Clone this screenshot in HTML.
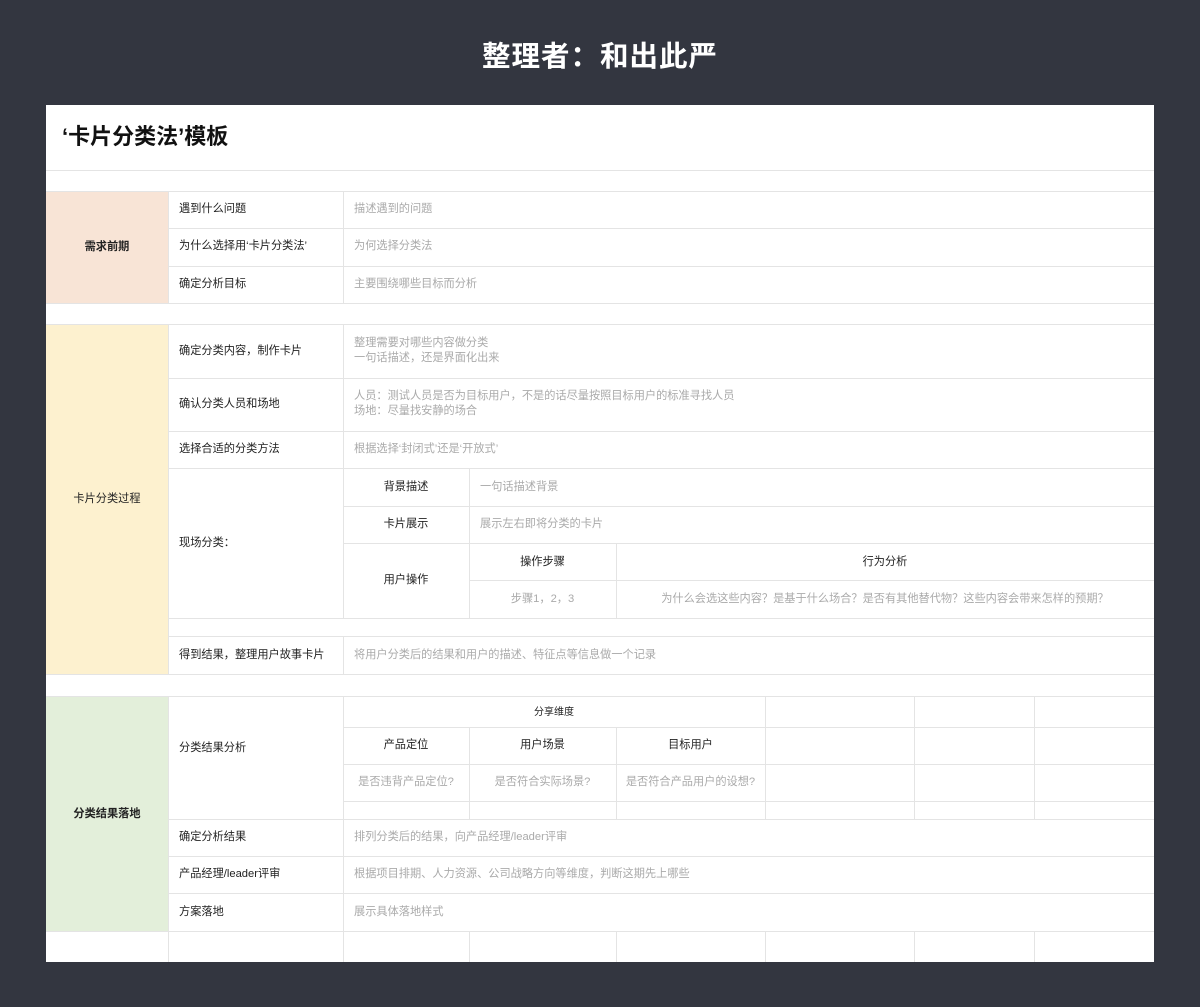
<!DOCTYPE html><html><head><meta charset="utf-8"><style>
body{margin:0;width:1200px;height:1007px;background:#333640;font-family:"Liberation Sans","Noto Sans CJK SC",sans-serif;position:relative;overflow:hidden}
#h{position:absolute;top:34px;left:0;width:1200px;text-align:center;color:#fff;font-size:28.5px;font-weight:bold;letter-spacing:1px}
#p{position:absolute;left:46px;top:105px;width:1108px;height:857px;background:#fff}
.h,.v{position:absolute;background:#e4e4e4}
.h{height:1px}.v{width:1px}
.f{position:absolute}
.t{position:absolute;font-size:11.2px;color:#222;line-height:15px;white-space:nowrap}
.g{color:#aaa}
.c{text-align:center}
.b{font-weight:bold}
</style></head><body>
<div id="h">整理者：和出此严</div>
<div id="p"></div>
<div class="t b" style="left:62px;top:123px;font-size:22px;line-height:27px;color:#111">‘卡片分类法’模板</div>
<div class="f" style="left:46px;top:191px;width:122px;height:112px;background:#f8e4d6"></div>
<div class="f" style="left:46px;top:324px;width:122px;height:350px;background:#fdf1cf"></div>
<div class="f" style="left:46px;top:696px;width:122px;height:235px;background:#e3efda"></div>
<div class="h" style="left:46px;width:1108px;top:170px"></div>
<div class="h" style="left:46px;width:1108px;top:191px"></div>
<div class="h" style="left:168px;width:986px;top:228px"></div>
<div class="h" style="left:168px;width:986px;top:266px"></div>
<div class="h" style="left:46px;width:1108px;top:303px"></div>
<div class="h" style="left:46px;width:1108px;top:324px"></div>
<div class="h" style="left:168px;width:986px;top:378px"></div>
<div class="h" style="left:168px;width:986px;top:431px"></div>
<div class="h" style="left:168px;width:986px;top:468px"></div>
<div class="h" style="left:343px;width:811px;top:506px"></div>
<div class="h" style="left:343px;width:811px;top:543px"></div>
<div class="h" style="left:469px;width:685px;top:580px"></div>
<div class="h" style="left:168px;width:986px;top:618px"></div>
<div class="h" style="left:168px;width:986px;top:636px"></div>
<div class="h" style="left:46px;width:1108px;top:674px"></div>
<div class="h" style="left:46px;width:1108px;top:696px"></div>
<div class="h" style="left:343px;width:811px;top:727px"></div>
<div class="h" style="left:343px;width:811px;top:764px"></div>
<div class="h" style="left:343px;width:811px;top:801px"></div>
<div class="h" style="left:168px;width:986px;top:819px"></div>
<div class="h" style="left:168px;width:986px;top:856px"></div>
<div class="h" style="left:168px;width:986px;top:893px"></div>
<div class="h" style="left:46px;width:1108px;top:931px"></div>
<div class="v" style="left:168px;top:191px;height:112px"></div>
<div class="v" style="left:168px;top:324px;height:350px"></div>
<div class="v" style="left:168px;top:696px;height:266px"></div>
<div class="v" style="left:343px;top:191px;height:112px"></div>
<div class="v" style="left:343px;top:324px;height:294px"></div>
<div class="v" style="left:343px;top:636px;height:38px"></div>
<div class="v" style="left:343px;top:696px;height:266px"></div>
<div class="v" style="left:469px;top:468px;height:150px"></div>
<div class="v" style="left:469px;top:727px;height:92px"></div>
<div class="v" style="left:469px;top:931px;height:31px"></div>
<div class="v" style="left:616px;top:543px;height:75px"></div>
<div class="v" style="left:616px;top:727px;height:92px"></div>
<div class="v" style="left:616px;top:931px;height:31px"></div>
<div class="v" style="left:765px;top:696px;height:123px"></div>
<div class="v" style="left:765px;top:931px;height:31px"></div>
<div class="v" style="left:914px;top:696px;height:123px"></div>
<div class="v" style="left:914px;top:931px;height:31px"></div>
<div class="v" style="left:1034px;top:696px;height:123px"></div>
<div class="v" style="left:1034px;top:931px;height:31px"></div>
<div class="t b c" style="left:46px;width:122px;top:240px">需求前期</div>
<div class="t c" style="left:46px;width:122px;top:492px">卡片分类过程</div>
<div class="t b c" style="left:46px;width:122px;top:807px">分类结果落地</div>
<div class="t" style="left:179px;top:202px">遇到什么问题</div>
<div class="t" style="left:179px;top:239px">为什么选择用‘卡片分类法’</div>
<div class="t" style="left:179px;top:277px">确定分析目标</div>
<div class="t" style="left:179px;top:344px">确定分类内容，制作卡片</div>
<div class="t" style="left:179px;top:397px">确认分类人员和场地</div>
<div class="t" style="left:179px;top:442px">选择合适的分类方法</div>
<div class="t" style="left:179px;top:536px">现场分类：</div>
<div class="t" style="left:179px;top:648px">得到结果，整理用户故事卡片</div>
<div class="t" style="left:179px;top:741px">分类结果分析</div>
<div class="t" style="left:179px;top:830px">确定分析结果</div>
<div class="t" style="left:179px;top:867px">产品经理/leader评审</div>
<div class="t" style="left:179px;top:905px">方案落地</div>
<div class="t g" style="left:354px;top:202px">描述遇到的问题</div>
<div class="t g" style="left:354px;top:239px">为何选择分类法</div>
<div class="t g" style="left:354px;top:277px">主要围绕哪些目标而分析</div>
<div class="t g" style="left:354px;top:336px">整理需要对哪些内容做分类<br>一句话描述，还是界面化出来</div>
<div class="t g" style="left:354px;top:389px">人员：测试人员是否为目标用户，不是的话尽量按照目标用户的标准寻找人员<br>场地：尽量找安静的场合</div>
<div class="t g" style="left:354px;top:442px">根据选择‘封闭式’还是‘开放式’</div>
<div class="t c" style="left:343px;width:126px;top:480px">背景描述</div>
<div class="t c" style="left:343px;width:126px;top:517px">卡片展示</div>
<div class="t c" style="left:343px;width:126px;top:573px">用户操作</div>
<div class="t g" style="left:480px;top:480px">一句话描述背景</div>
<div class="t g" style="left:480px;top:517px">展示左右即将分类的卡片</div>
<div class="t c" style="left:469px;width:147px;top:555px">操作步骤</div>
<div class="t c" style="left:616px;width:538px;top:555px">行为分析</div>
<div class="t g c" style="left:469px;width:147px;top:592px">步骤1，2，3</div>
<div class="t g c" style="left:616px;width:538px;top:592px">为什么会选这些内容？是基于什么场合？是否有其他替代物？这些内容会带来怎样的预期？</div>
<div class="t g" style="left:354px;top:648px">将用户分类后的结果和用户的描述、特征点等信息做一个记录</div>
<div class="t c" style="left:343px;width:422px;top:705px;font-size:10px">分享维度</div>
<div class="t c" style="left:343px;width:126px;top:738px">产品定位</div>
<div class="t c" style="left:469px;width:147px;top:738px">用户场景</div>
<div class="t c" style="left:616px;width:149px;top:738px">目标用户</div>
<div class="t g c" style="left:343px;width:126px;top:775px">是否违背产品定位?</div>
<div class="t g c" style="left:469px;width:147px;top:775px">是否符合实际场景?</div>
<div class="t g c" style="left:616px;width:149px;top:775px">是否符合产品用户的设想?</div>
<div class="t g" style="left:354px;top:830px">排列分类后的结果，向产品经理/leader评审</div>
<div class="t g" style="left:354px;top:867px">根据项目排期、人力资源、公司战略方向等维度，判断这期先上哪些</div>
<div class="t g" style="left:354px;top:905px">展示具体落地样式</div>
</body></html>
